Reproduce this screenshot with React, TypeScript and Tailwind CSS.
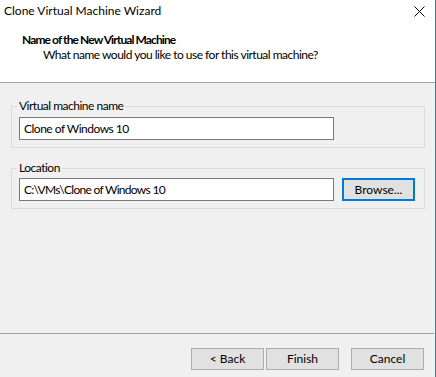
import React from "react";

const font = { fontFamily: 'Lato, "Noto Sans", "Liberation Sans", sans-serif' };

const WinButton: React.FC<{ label: string; focused?: boolean; className?: string }> = ({
  label,
  focused,
  className = "",
}) => (
  <button
    className={
      "h-[22px] w-[73px] bg-[#e1e1e1] text-[12px] leading-4 text-black " +
      (focused ? "border-2 border-[#0078d7] " : "border border-[#adadad] ") +
      className
    }
  >
    {label}
  </button>
);

const App: React.FC = () => {
  return (
    <div
      className="flex h-[377px] w-[436px] flex-col border-r border-[#1883d7] bg-[#f0f0f0] text-[12px] text-black"
      style={font}
    >
      {/* title + header */}
      <div className="h-[82px] bg-white">
        <div className="flex items-start justify-between pt-[3px] pl-[4px] pr-[10px]">
          <span className="leading-4">Clone Virtual Machine Wizard</span>
          <svg width="11" height="11" viewBox="0 0 11 11" className="mt-[3px]">
            <path d="M0.5 0.5L10.5 10.5M10.5 0.5L0.5 10.5" stroke="#000" strokeWidth="1" />
          </svg>
        </div>
        <div className="mt-[14px] pl-[22px] font-bold leading-[13px] tracking-[-0.9px]">
          Name of the New Virtual Machine
        </div>
        <div className="mt-[2px] pl-[43px] leading-[13px] tracking-[-0.5px]">
          What name would you like to use for this virtual machine?
        </div>
      </div>
      <div className="h-px bg-[#a0a0a0]" />

      {/* body */}
      <div className="flex flex-1 flex-col pl-[11px] pt-[15px] tracking-[-0.5px]">
        <fieldset className="w-[414px] border border-[#dcdcdc] px-[7px] pt-[3px] pb-[7px]">
          <legend className="-ml-[2px] px-[2px] leading-4">Virtual machine name</legend>
          <div className="flex h-[23px] w-[315px] items-center border border-[#7a7a7a] bg-white pl-[4px]">
            Clone of Windows 10
          </div>
        </fieldset>
        <fieldset className="mt-[12px] w-[414px] border border-[#dcdcdc] px-[7px] pt-[2px] pb-[7px]">
          <legend className="-ml-[2px] px-[2px] leading-4">Location</legend>
          <div className="flex items-start gap-[8px]">
            <div className="flex h-[23px] w-[315px] items-center border border-[#7a7a7a] bg-white pl-[4px] tracking-[-0.7px]">
              C:\VMs\Clone of Windows 10
            </div>
            <WinButton label="Browse..." focused className="h-[23px] tracking-normal" />
          </div>
        </fieldset>
      </div>

      {/* footer */}
      <div className="h-px w-[434px] bg-[#a0a0a0]" />
      <div className="flex h-[43px] items-start pt-[14px] pl-[191px]">
        <WinButton label="< Back" />
        <WinButton label="Finish" className="ml-[2px]" />
        <WinButton label="Cancel" className="ml-[12px]" />
      </div>
    </div>
  );
};

export default App;
